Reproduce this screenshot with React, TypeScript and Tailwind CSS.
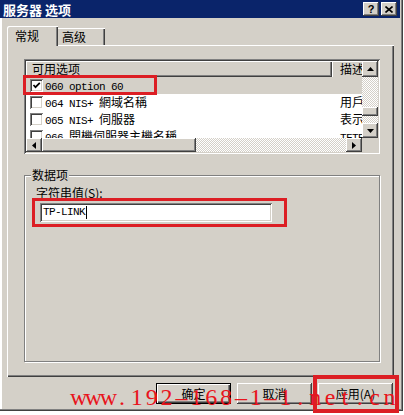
import React from "react";

const raised =
  "shadow-[inset_-1px_-1px_0_#404040,inset_1px_1px_0_#ffffff,inset_-2px_-2px_0_#808080]";
const sunken =
  "shadow-[inset_1px_1px_0_#808080,inset_-1px_-1px_0_#ffffff,inset_2px_2px_0_#404040,inset_-2px_-2px_0_#d4d0c8]";
const checker =
  "bg-[image:repeating-conic-gradient(#d4d0c8_0%_25%,#ffffff_0%_50%)] bg-[length:2px_2px]";
const cjk = "font-['Noto_Sans_CJK_SC','Noto_Sans_CJK_TC',sans-serif]";
const mono = "font-['Liberation_Mono',monospace] text-[11px] tracking-[-0.6px]";

const ROWS = [
  { checked: true, name: "060 option 60", desc: "" },
  { checked: false, name: "064 NIS+ 網域名稱", desc: "用戶端 NIS+ 網域名稱" },
  { checked: false, name: "065 NIS+ 伺服器", desc: "表示 NIS+ 伺服器" },
  { checked: false, name: "066 開機伺服器主機名稱", desc: "TFTP 開機伺服器主機名稱" },
];

const WATERMARK = "www.192–168–1–1.net.cn";

// ascii runs in the mono face, the rest in the CJK face
const Mixed = ({ text }: { text: string }) => (
  <>
    {text.split(/([\x20-\x7e]+)/).map((part, i) =>
      part === "" ? null : /^[\x20-\x7e]+$/.test(part) ? (
        <span key={i} className={`${mono} whitespace-pre`}>
          {part}
        </span>
      ) : (
        <span key={i} className={`${cjk} text-[12px]`}>
          {part}
        </span>
      ),
    )}
  </>
);

const Arrow = ({ dir }: { dir: "up" | "down" | "left" | "right" }) => {
  const horiz = dir === "left" || dir === "right";
  const points = {
    up: "3.5,0 7,4 0,4",
    down: "0,0 7,0 3.5,4",
    left: "4,0 4,7 0,3.5",
    right: "0,0 4,3.5 0,7",
  }[dir];
  return (
    <svg width={horiz ? 4 : 7} height={horiz ? 7 : 4} viewBox={horiz ? "0 0 4 7" : "0 0 7 4"}>
      <polygon points={points} fill="#000" />
    </svg>
  );
};

const Checkbox = ({ checked }: { checked: boolean }) => (
  <div className={`flex h-[13px] w-[13px] shrink-0 items-center justify-center bg-white ${sunken}`}>
    {checked && (
      <svg width="9" height="9" viewBox="0 0 9 9">
        <path d="M1.5 4 L3.5 6.2 L7.8 1.8" stroke="#000" strokeWidth="1.7" fill="none" />
      </svg>
    )}
  </div>
);

const TitleBar = () => (
  <div className="flex h-[18px] w-[400px] items-center justify-between bg-[#0a246a] pl-[3px] pr-[3px]">
    <span className={`${cjk} text-[13px] font-bold leading-none text-white`}>服务器 选项</span>
    <div className="flex gap-[2px]">
      <div className={`flex h-[14px] w-[16px] items-center justify-center bg-[#d4d0c8] ${raised}`}>
        <span className="font-['Liberation_Sans',sans-serif] text-[11px] font-bold leading-none">?</span>
      </div>
      <div className={`flex h-[14px] w-[16px] items-center justify-center bg-[#d4d0c8] ${raised}`}>
        <svg width="8" height="7" viewBox="0 0 8 7">
          <path d="M0.5 0.5 L7.5 6.5 M7.5 0.5 L0.5 6.5" stroke="#000" strokeWidth="1.6" />
        </svg>
      </div>
    </div>
  </div>
);

const Tabs = () => (
  <div className={`ml-[7px] mt-[8px] flex h-[19px] items-end ${cjk} text-[12px]`}>
    <div className="relative z-10 h-[20px] w-[51px] translate-y-[1px] rounded-tl-[2px] bg-[#d4d0c8] pl-[8px] pt-[1px] leading-[18px] shadow-[inset_1px_1px_0_#ffffff,inset_-1px_0_0_#404040,inset_-2px_0_0_#808080]">
      常规
    </div>
    <div className="h-[17px] w-[47px] bg-[#d4d0c8] pl-[4px] leading-[17px] shadow-[inset_0_1px_0_#ffffff,inset_-1px_0_0_#404040,inset_-2px_0_0_#808080]">
      高级
    </div>
  </div>
);

const ListView = () => (
  <div className={`flex h-[95px] w-[356px] bg-white p-[2px] ${sunken}`}>
    <div className="flex w-[336px] flex-col">
      <div className={`flex h-[16px] ${cjk} text-[12px] leading-[16px]`}>
        <div className="w-[306px] bg-[#d4d0c8] pl-[6px] shadow-[inset_1px_1px_0_#ffffff,inset_-1px_-1px_0_#404040,inset_-2px_-2px_0_#808080]">
          可用选项
        </div>
        <div className="w-[30px] overflow-hidden whitespace-nowrap bg-[#d4d0c8] pl-[8px] shadow-[inset_1px_1px_0_#ffffff]">
          描述
        </div>
      </div>
      <div className="flex h-[61px] flex-col overflow-hidden">
        {ROWS.map((row, i) => (
          <div
            key={`${row.name}-${i + 1}`}
            className={`flex h-[17px] shrink-0 items-center leading-[17px] ${i === 0 ? "bg-[#d4d0c8]" : ""}`}
          >
            <div className="flex w-[306px] items-center gap-[2px] pl-[4px]">
              <Checkbox checked={row.checked} />
              <span className="whitespace-nowrap">
                <Mixed text={row.name} />
              </span>
            </div>
            <div className="w-[30px] overflow-hidden whitespace-nowrap pl-[8px]">
              <Mixed text={row.desc} />
            </div>
          </div>
        ))}
      </div>
      <div className="flex h-[14px]">
        <div className={`flex w-[16px] items-center justify-center bg-[#d4d0c8] ${raised}`}>
          <Arrow dir="left" />
        </div>
        <div className={`w-[154px] bg-[#d4d0c8] ${raised}`} />
        <div className={`flex-1 ${checker}`} />
        <div className={`flex w-[16px] items-center justify-center bg-[#d4d0c8] ${raised}`}>
          <Arrow dir="right" />
        </div>
      </div>
    </div>
    <div className="flex w-[16px] flex-col">
      <div className={`flex h-[16px] items-center justify-center bg-[#d4d0c8] ${raised}`}>
        <Arrow dir="up" />
      </div>
      <div className={`flex h-[46px] flex-col pt-[30px] ${checker}`}>
        <div className={`h-[9px] bg-[#d4d0c8] ${raised}`} />
      </div>
      <div className={`flex h-[15px] items-center justify-center bg-[#d4d0c8] ${raised}`}>
        <Arrow dir="down" />
      </div>
      <div className="h-[14px] bg-[#d4d0c8]" />
    </div>
  </div>
);

const DataGroup = () => (
  <div className="mt-[21px] flex h-[187px] w-[356px] flex-col border border-[#808080] shadow-[inset_1px_1px_0_#ffffff,1px_1px_0_#ffffff]">
    <span className={`-mt-[9px] ml-[6px] w-fit bg-[#d4d0c8] px-[1px] ${cjk} text-[12px] leading-[16px]`}>
      数据项
    </span>
    <span className={`ml-[11px] mt-[2px] ${cjk} text-[12px] leading-[16px]`}>字符串值(S):</span>
    <div className={`ml-[15px] mt-[2px] flex h-[19px] w-[232px] items-center bg-white pl-[3px] ${sunken}`}>
      <span className={`${mono} leading-none`}>TP-LINK</span>
      <span className="ml-[1px] h-[13px] w-[1px] bg-black" />
    </div>
  </div>
);

const Button = ({ label, isDefault }: { label: string; isDefault?: boolean }) => (
  <div
    className={`flex h-[21px] w-[75px] items-center justify-center bg-[#d4d0c8] ${cjk} text-[12px] ${
      isDefault
        ? "border border-black shadow-[inset_1px_1px_0_#ffffff,inset_-1px_-1px_0_#404040,inset_-2px_-2px_0_#808080]"
        : raised
    }`}
  >
    {label}
  </div>
);

export default function App() {
  return (
    <div className="relative h-[415px] w-[404px] overflow-hidden bg-white text-black">
      <div className="relative flex h-[411px] w-[403px] flex-col bg-[#d4d0c8] shadow-[inset_-1px_-1px_0_#404040,inset_-2px_-2px_0_#808080,inset_2px_0_0_#ffffff]">
        <TitleBar />
        <Tabs />
        <div className="ml-[7px] flex h-[332px] w-[387px] flex-col pl-[17px] pt-[14px] shadow-[inset_1px_1px_0_#ffffff,inset_-1px_-1px_0_#404040,inset_-2px_-2px_0_#808080]">
          <ListView />
          <DataGroup />
        </div>
        <div className="ml-[7px] mt-[6px] flex w-[386px] justify-end gap-[6px]">
          <Button label="确定" isDefault />
          <Button label="取消" />
          <Button label="应用(A)" />
        </div>

        {/* annotations drawn over the dialog */}
        <div className="pointer-events-none absolute left-[23px] top-[75px] h-[20px] w-[134px] border-[3px] border-[#dc1e24]" />
        <div className="pointer-events-none absolute left-[32px] top-[198px] h-[29px] w-[255px] border-[3px] border-[#dc1e24]" />
        <div className="pointer-events-none absolute left-[313px] top-[375px] h-[38px] w-[86px] border-[4px] border-[#dc1e24]" />
        <div className="pointer-events-none absolute left-[70px] top-[385px] flex font-['Liberation_Serif',serif] text-[24px] leading-[24px] text-[#e8141c]">
          {WATERMARK.split("").map((ch, i) => (
            <span key={i} className="inline-block w-[14.86px] text-center">
              {ch}
            </span>
          ))}
        </div>
      </div>
    </div>
  );
}
